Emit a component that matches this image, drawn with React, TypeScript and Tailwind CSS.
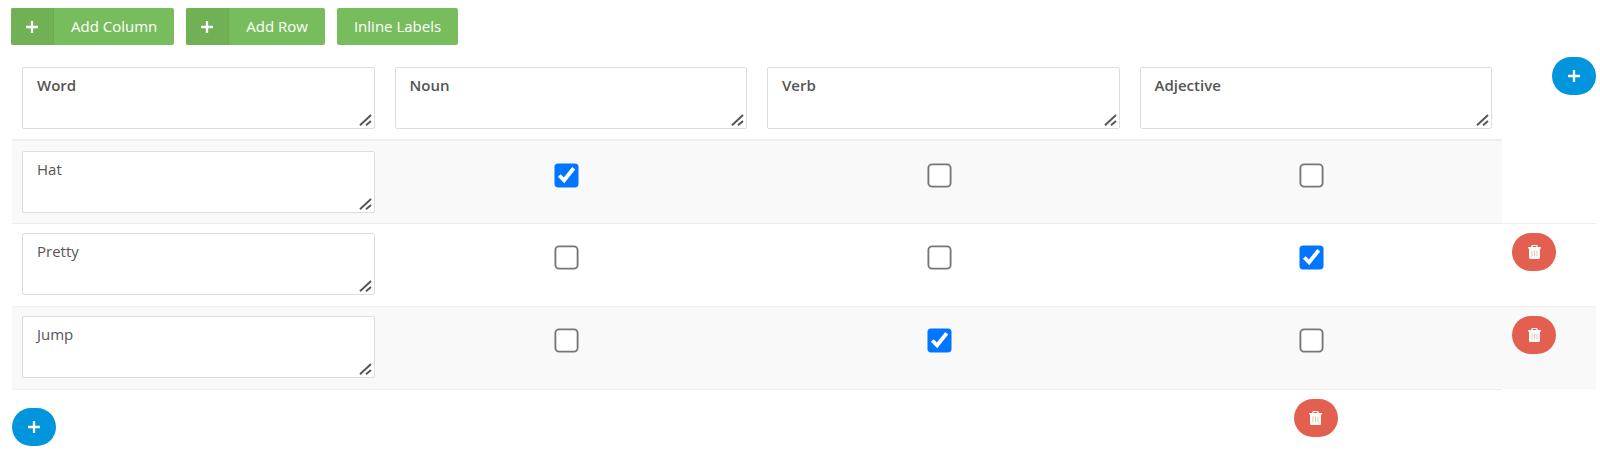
import { useState } from "react";

type ButtonProps = {
  label: string;
  withIcon?: boolean;
};

type CellProps = {
  label: string;
  value: string;
  bold?: boolean;
};

const columns = ["Word", "Noun", "Verb", "Adjective"];

const rows = [
  { word: "Hat", checked: [true, false, false], removable: false },
  { word: "Pretty", checked: [false, false, true], removable: true },
  { word: "Jump", checked: [false, true, false], removable: true },
];

const PlusIcon = () => (
  <svg viewBox="0 0 12 12" className="size-3" fill="none" stroke="currentColor" strokeWidth="2.3" aria-hidden="true">
    <path d="M6 0v12M0 6h12" />
  </svg>
);

const TrashIcon = () => (
  <svg viewBox="0 0 13 14" className="h-3.5 w-[13px]" fill="currentColor" aria-hidden="true">
    <path
      fillRule="evenodd"
      d="M4.6 0h3.8c.5 0 .8.2 1 .6L10 2h2.5c.3 0 .5.2.5.5v.9h-1v8.8c0 1-.6 1.8-1.5 1.8h-8C1.6 14 1 13.2 1 12.200V3.400H0v-.9C0 2.200.2 2 .5 2H3L3.600.6c.2-.4.5-.6 1-.6zM4.800 1.100 4.400 2h4.200l-.4-.9z"
    />
    <path d="M3.5 5.5h1v6h-1zM6 5.5h1v6H6zM8.5 5.5h1v6h-1z" fill="#f5c0a8" />
  </svg>
);

const ToolbarButton = ({ label, withIcon }: ButtonProps) => {
  return (
    <button
      type="button"
      className="flex h-[37px] items-stretch overflow-hidden rounded-xs bg-[#78bd5d] text-[15px] text-white"
    >
      {withIcon && (
        <span className="flex w-[43px] items-center justify-center border-r border-[#6cab54] bg-[#70b156]">
          <PlusIcon />
        </span>
      )}
      <span className="self-center px-[17px]">{label}</span>
    </button>
  );
};

const AddButton = ({ label }: { label: string }) => {
  return (
    <button
      type="button"
      aria-label={label}
      className="inline-flex h-[38px] w-11 items-center justify-center rounded-[20px] bg-[#0095dd] align-top text-white"
    >
      <PlusIcon />
    </button>
  );
};

const DeleteButton = ({ label }: { label: string }) => {
  return (
    <button
      type="button"
      aria-label={label}
      className="inline-flex h-[38px] w-11 items-center justify-center rounded-[20px] bg-[#e35f50] align-top text-white"
    >
      <TrashIcon />
    </button>
  );
};

const TextCell = ({ label, value, bold }: CellProps) => {
  return (
    <div className="relative">
      <textarea
        aria-label={label}
        defaultValue={value}
        className={`block h-[62px] w-full resize-none rounded-xs border border-[#dddddd] bg-white px-3.5 py-[5px] text-[15px] leading-6 text-[#555555] ${
          bold ? "font-semibold" : ""
        }`}
      />
      <svg
        viewBox="0 0 12 12"
        className="pointer-events-none absolute right-1 bottom-1 size-3 overflow-visible"
        fill="none"
        stroke="#555555"
        strokeWidth="1.9"
        aria-hidden="true"
      >
        <path d="M1 12.3 12 2M7 12.3 12 8" />
      </svg>
    </div>
  );
};

const Checkbox = ({ label, checked }: { label: string; checked: boolean }) => {
  const [on, setOn] = useState(checked);
  return (
    <input
      type="checkbox"
      aria-label={label}
      checked={on}
      onChange={() => setOn(!on)}
      className="mt-[18px] mr-2 size-[13px] scale-[1.85] align-top"
    />
  );
};

export default function App() {
  return (
    <main className="bg-white pr-1 pl-3 pt-2 font-['Open_Sans',sans-serif]">
      <div className="-ml-px flex gap-3">
        <ToolbarButton label="Add Column" withIcon />
        <ToolbarButton label="Add Row" withIcon />
        <ToolbarButton label="Inline Labels" />
      </div>

      <table className="mt-3 w-full table-fixed border-separate border-spacing-0">
        <colgroup>
          {columns.map((name) => (
            <col key={name} />
          ))}
          <col className="w-[94px]" />
        </colgroup>
        <thead>
          <tr>
            {columns.map((name) => (
              <th key={name} className="border-b-2 border-[#eeeeee] p-2.5">
                <TextCell label={`${name} heading`} value={name} bold />
              </th>
            ))}
            <td className="text-right align-top">
              <AddButton label="Add column" />
            </td>
          </tr>
        </thead>
        <tbody>
          {rows.map((row, i) => {
            const shade = i % 2 === 0 ? "bg-[#f9f9f9]" : "bg-white";
            const line = i > 0 ? "border-t border-[#eeeeee]" : "";
            const pad = i > 0 ? "px-2.5 pt-[9px] pb-[11px]" : "p-2.5";
            return (
              <tr key={row.word}>
                <td className={`${pad} ${shade} ${line}`}>
                  <TextCell label={`Row ${i + 1}`} value={row.word} />
                </td>
                {row.checked.map((checked, j) => (
                  <td key={columns[j + 1]} className={`text-center align-top ${pad} ${shade} ${line}`}>
                    <Checkbox label={`${row.word}: ${columns[j + 1]}`} checked={checked} />
                  </td>
                ))}
                {row.removable && (
                  <td className={`align-top ${pad} ${shade} ${line}`}>
                    <DeleteButton label={`Delete ${row.word}`} />
                  </td>
                )}
              </tr>
            );
          })}
        </tbody>
        <tfoot>
          <tr>
            <td className="border-t border-[#eeeeee] pt-[18px] align-top">
              <AddButton label="Add row" />
            </td>
            <td className="border-t border-[#eeeeee]" />
            <td className="border-t border-[#eeeeee]" />
            <td className="border-t border-[#eeeeee] pt-[9px] text-center align-top">
              <DeleteButton label="Delete Adjective" />
            </td>
          </tr>
        </tfoot>
      </table>
    </main>
  );
}
